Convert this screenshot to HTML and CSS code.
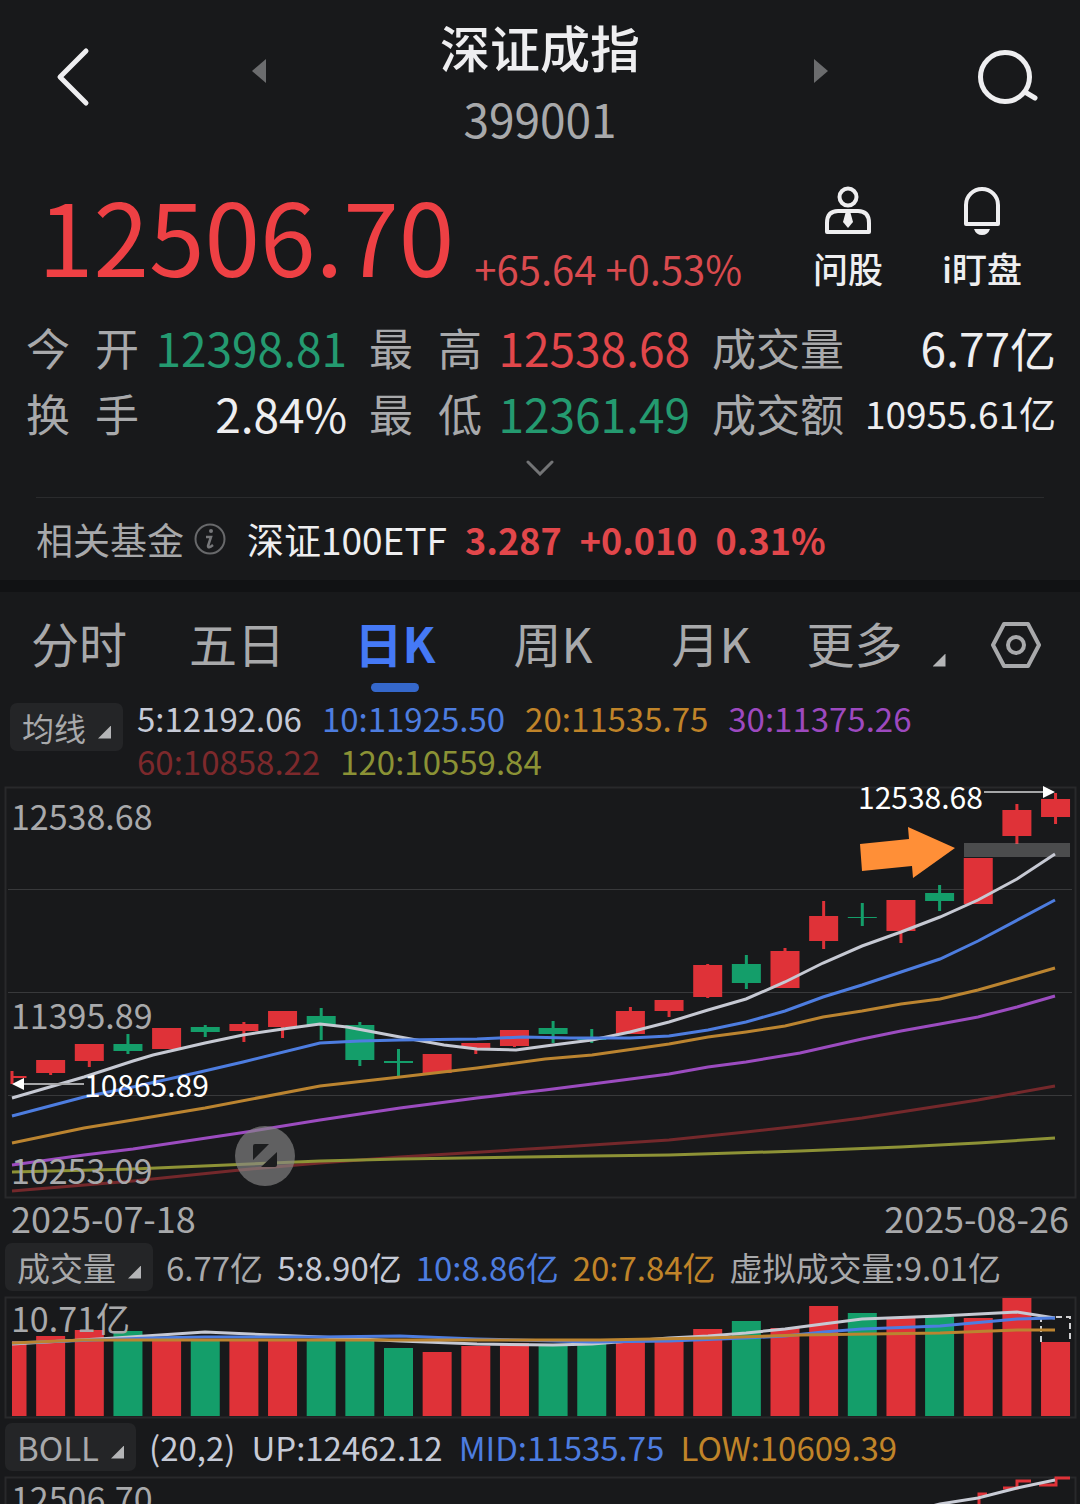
FILE: index.html
```html
<!DOCTYPE html>
<html lang="zh-CN">

<head>
    <meta charset="UTF-8">
    <meta name="viewport" content="width=device-width, initial-scale=1.0">
    <title>深证成指 399001</title>
    <link rel="stylesheet" href="styles.css">
</head>

<body>
    <header class="topbar">
        <button class="icon-btn back" aria-label="返回">
            <svg width="36" height="62" viewBox="0 0 36 62"><path d="M31 5 L5 31 L31 57" class="line-icon"/></svg>
        </button>
        <div class="switcher">
            <button class="step-btn" aria-label="上一个">
                <svg width="14" height="24" viewBox="0 0 14 24"><path d="M14 0 V24 L0 12 Z" fill="#6b6c6e"/></svg>
            </button>
            <div class="title">
                <h1>深证成指</h1>
                <p>399001</p>
            </div>
            <button class="step-btn" aria-label="下一个">
                <svg width="14" height="24" viewBox="0 0 14 24"><path d="M0 0 V24 L14 12 Z" fill="#6b6c6e"/></svg>
            </button>
        </div>
        <button class="icon-btn search" aria-label="搜索">
            <svg width="62" height="56" viewBox="0 0 62 56"><circle cx="28" cy="28" r="24.5" class="line-icon"/><path d="M48 43 L58 49" class="line-icon"/></svg>
        </button>
    </header>

    <main>
        <section class="quote">
            <div class="price-row">
                <strong class="price">12506.70</strong>
                <span class="change">+65.64 +0.53%</span>
                <div class="actions">
                    <button class="action">
                        <svg width="48" height="50" viewBox="0 0 48 50">
                            <circle cx="24" cy="11" r="8.5" fill="none" stroke="#eeeef0" stroke-width="4"/>
                            <path d="M3 46 V37 Q3 25 14 25 H34 Q45 25 45 37 V46 Z" fill="none" stroke="#eeeef0" stroke-width="4" stroke-linejoin="round"/>
                            <path d="M22 25 H26 L29 36 L24 42 L19 36 Z" fill="#eeeef0"/>
                        </svg>
                        问股
                    </button>
                    <button class="action">
                        <svg width="48" height="50" viewBox="0 0 48 50">
                            <path d="M8 38 V19 A16 16 0 0 1 40 19 V38 Z" fill="none" stroke="#eeeef0" stroke-width="4" stroke-linejoin="round"/>
                            <path d="M16 43 H32 Q30 49 24 49 Q18 49 16 43 Z" fill="#eeeef0"/>
                        </svg>
                        i盯盘
                    </button>
                </div>
            </div>

            <dl class="stats">
                <div><dt><span>今</span><span>开</span></dt><dd class="down">12398.81</dd></div>
                <div><dt><span>最</span><span>高</span></dt><dd class="up">12538.68</dd></div>
                <div><dt class="wide">成交量</dt><dd>6.77亿</dd></div>
                <div><dt><span>换</span><span>手</span></dt><dd>2.84%</dd></div>
                <div><dt><span>最</span><span>低</span></dt><dd class="down">12361.49</dd></div>
                <div><dt class="wide">成交额</dt><dd class="small">10955.61亿</dd></div>
            </dl>

            <button class="expand" aria-label="展开">
                <svg width="28" height="16" viewBox="0 0 28 16"><path d="M2 2 L14 14 L26 2" fill="none" stroke="#737476" stroke-width="3" stroke-linecap="round"/></svg>
            </button>
        </section>

        <section class="fund">
            <span class="fund-label">相关基金</span>
            <svg width="32" height="32" viewBox="0 0 32 32">
                <circle cx="16" cy="16" r="14.5" fill="none" stroke="#68696b" stroke-width="2"/>
                <circle cx="17" cy="8" r="2" fill="#77787a"/>
                <path d="M12 14 H17 L14 23 Q14 26 19 22" fill="none" stroke="#77787a" stroke-width="2.5"/>
            </svg>
            <a href="#" class="fund-name">深证100ETF</a>
            <b>3.287</b>
            <b>+0.010</b>
            <b>0.31%</b>
        </section>

        <nav class="tabs">
            <button>分时</button>
            <button>五日</button>
            <button class="active">日K</button>
            <button>周K</button>
            <button>月K</button>
            <button class="more">更多<i class="corner"></i></button>
            <button class="settings" aria-label="设置">
                <svg width="50" height="48" viewBox="0 0 50 48">
                    <path d="M13 3 H37 L48 24 L37 45 H13 L2 24 Z" fill="none" stroke="#a8a9ab" stroke-width="4" stroke-linejoin="round"/>
                    <circle cx="25" cy="24" r="8" fill="none" stroke="#a8a9ab" stroke-width="4"/>
                </svg>
            </button>
        </nav>

        <section>
            <div class="legend ma-legend">
                <button class="picker">均线<i class="corner"></i></button>
                <div class="values">
                    <span class="c5">5:12192.06</span>
                    <span class="c10">10:11925.50</span>
                    <span class="c20">20:11535.75</span>
                    <span class="c30">30:11375.26</span>
                    <span class="c60">60:10858.22</span>
                    <span class="c120">120:10559.84</span>
                </div>
            </div>
            <div class="chart">
                <svg class="kline" viewBox="0 0 1080 414">
                    <rect x="5.5" y="1.5" width="1070" height="410" class="frame"/>
                    <path d="M8 103.5 H1072 M8 206.5 H1072 M8 309.5 H1072" class="grid-line"/>
                    <g id="candles"></g>
                    <rect x="964" y="57" width="106" height="14" fill="#a0a0a0" fill-opacity="0.38"/>
                    <g id="maLines"></g>
                    <text x="11" y="44" class="axis">12538.68</text>
                    <text x="11" y="243" class="axis">11395.89</text>
                    <text x="11" y="398" class="axis">10253.09</text>
                    <path d="M22 298 H84 M984 6 H1045" stroke="#a5a6a8" stroke-width="2"/>
                    <path d="M12 298 L24 292 V304 Z M1055 6 L1043 0 V12 Z" fill="#fff"/>
                    <text x="84" y="311" class="mark">10865.89</text>
                    <text x="858" y="23" class="mark">12538.68</text>
                    <path d="M860 58 L909 53 L908 41 L955 62 L913 92 L912 80 L862 85 Z" fill="#ff8f37"/>
                </svg>
                <button class="fullscreen" aria-label="全屏">
                    <svg width="60" height="60" viewBox="0 0 60 60"><path d="M18 20 Q18 18 20 18 H34 L18 34 Z M42 26 V39 Q42 41 40 41 H26 Z" fill="#1c1d1e"/></svg>
                </button>
            </div>
            <div class="dates"><time>2025-07-18</time><time>2025-08-26</time></div>
        </section>

        <section>
            <div class="legend">
                <button class="picker">成交量<i class="corner"></i></button>
                <div class="values">
                    <span>6.77亿</span>
                    <span class="c5">5:8.90亿</span>
                    <span class="c10">10:8.86亿</span>
                    <span class="c20">20:7.84亿</span>
                    <span>虚拟成交量:9.01亿</span>
                </div>
            </div>
            <div class="chart">
                <svg viewBox="0 0 1080 124">
                    <rect x="5.5" y="1.5" width="1070" height="120" class="frame"/>
                    <g id="volumes"></g>
                    <path d="M1041 46 V21 H1070 V46" fill="none" stroke="#d0d0d2" stroke-width="2" stroke-dasharray="6 4"/>
                    <g id="volumeLines"></g>
                    <text x="11" y="36" class="axis">10.71亿</text>
                </svg>
            </div>
        </section>

        <section>
            <div class="legend boll-legend">
                <button class="picker">BOLL<i class="corner"></i></button>
                <div class="values">
                    <span class="c5">(20,2)</span>
                    <span class="c5">UP:12462.12</span>
                    <span class="c10">MID:11535.75</span>
                    <span class="c20">LOW:10609.39</span>
                </div>
            </div>
            <div class="chart">
                <svg viewBox="0 0 1080 28">
                    <path d="M5.5 28 V1.5 H1075.5 V28" class="frame"/>
                    <path d="M979 28 V18 H987 M1003 12 H1017 V5 H1031 M1039 9 H1056 V2 H1070" fill="none" stroke="#df3238" stroke-width="3"/>
                    <path d="M932 30 L940 28 L978 22 L1017 12 L1055 4" fill="none" stroke="#c9ccd6" stroke-width="3"/>
                    <text x="11" y="36" class="axis">12506.70</text>
                </svg>
            </div>
        </section>
    </main>

    <script>
        const RED = '#df3238';
        const GREEN = '#149e6a';
        const STEP = 38.65;
        const BAR = 29;

        // [涨跌, 最高, 实体上沿, 实体下沿, 最低, 成交量柱顶]
        const days = [
            [1, 285, 290, 292, 298, 45], [1, 274, 274, 287, 289, 40], [1, 258, 258, 275, 281, 34],
            [0, 248, 258, 265, 268, 35], [1, 242, 242, 263, 263, 45], [0, 239, 241, 246, 251, 44],
            [1, 236, 238, 245, 256, 45], [1, 225, 225, 241, 252, 45], [0, 222, 230, 239, 254, 45],
            [0, 236, 239, 274, 280, 45], [0, 263, 275, 277, 290, 52], [1, 268, 268, 287, 287, 56],
            [1, 257, 257, 262, 268, 50], [1, 244, 244, 260, 261, 47], [0, 235, 242, 248, 257, 48],
            [0, 243, 252, 254, 257, 48], [1, 221, 225, 248, 248, 46], [1, 214, 214, 225, 231, 46],
            [1, 178, 179, 211, 212, 33], [0, 169, 178, 197, 203, 25], [1, 162, 165, 202, 202, 32],
            [1, 115, 130, 155, 163, 10], [0, 117, 131, 132, 140, 17], [1, 114, 114, 145, 157, 21],
            [0, 99, 107, 115, 125, 21], [1, 72, 72, 118, 118, 22], [1, 18, 24, 50, 58, 2],
            [1, 7, 13, 31, 38, 46]
        ];

        const maLines = [
            ['#74282b', '12,405 133,395 240,384 320,377 400,371 545,362 592,359 669,354 746,346 800,340 862,332 978,314 1055,300'],
            ['#8d9236', '12,386 133,383 320,375 400,373 592,370 669,369 800,365 900,361 978,357 1055,352'],
            ['#9c4cc0', '12,379 84,369 133,363 240,347 283,340 320,334 400,322 477,312 545,304 592,298 669,288 708,281 746,276 800,267 862,253 901,245 940,238 978,231 1017,221 1055,210'],
            ['#bb8430', '12,357 84,342 133,334 205,322 320,300 400,291 477,282 545,273 592,269 669,258 708,251 746,246 785,240 823,231 862,225 901,218 940,213 978,204 1017,193 1055,182'],
            ['#c6c9d3', '12,312 84,291 133,275 153,269 205,257 243,249 283,243 320,238 347,241 400,251 444,259 477,263 516,264 553,259 592,254 630,246 669,236 708,224 746,213 785,196 823,177 862,160 901,146 940,131 978,114 1017,93 1055,68'],
            ['#4d7de0', '12,330 84,311 133,301 200,286 243,276 320,257 360,255 400,254 477,253 523,251 570,252 630,252 669,250 708,244 746,236 785,225 823,211 862,199 901,186 940,173 978,155 1055,114']
        ];

        const volumeLines = [
            ['#c6c9d3', '12,48 115,42 205,36 320,41 400,45 477,48 553,49 592,48 630,45 669,42 708,40 746,37 785,33 823,28 862,23 940,20 1017,16 1055,22'],
            ['#4d7de0', '12,47 150,42 205,41 320,41 400,40 477,43 592,46 669,45 746,42 785,40 823,36 862,33 940,30 1017,23 1055,22'],
            ['#bb8430', '12,47 84,44 160,44 400,44 600,44 708,42 800,39 940,37 1017,34 1055,34']
        ];

        function drawLines(id, lines) {
            document.getElementById(id).innerHTML = lines.map(([color, points]) =>
                `<polyline points="${points}" fill="none" stroke="${color}" stroke-width="3"/>`
            ).join('');
        }

        let candles = '';
        let volumes = '';
        days.forEach(([up, high, top, bottom, low, volume], i) => {
            const x = 12 + i * STEP;
            // 第一根只露出右半边
            const left = i === 0 ? x : x - BAR / 2;
            const width = i === 0 ? BAR / 2 : BAR;
            const color = up ? RED : GREEN;
            candles += `<rect x="${x - 1.5}" y="${high}" width="3" height="${low - high}" fill="${color}"/>`;
            candles += `<rect x="${left}" y="${top}" width="${width}" height="${bottom - top}" fill="${color}"/>`;
            volumes += `<rect x="${left}" y="${volume}" width="${width}" height="${120 - volume}" fill="${color}"/>`;
        });
        document.getElementById('candles').innerHTML = candles;
        document.getElementById('volumes').innerHTML = volumes;
        drawLines('maLines', maLines);
        drawLines('volumeLines', volumeLines);
    </script>
</body>

</html>
```
FILE: styles.css
```css
* {
    box-sizing: border-box;
}

body {
    margin: 0;
    background-color: #18191b;
    color: #eeeef0;
    font-family: "Noto Sans CJK SC", sans-serif;
}

h1,
p,
dl,
dd {
    margin: 0;
}

button {
    padding: 0;
    border: none;
    background: none;
    color: inherit;
    font: inherit;
    cursor: pointer;
}

svg {
    display: block;
}

.up {
    color: #e2474b;
}

.down {
    color: #249a70;
}

/* 顶部标题栏 */
.topbar {
    display: grid;
    grid-template-columns: 1fr auto 1fr;
    align-items: start;
    padding: 10px 41px 0 55px;
}

.icon-btn {
    height: 134px;
}

.back {
    justify-self: start;
}

.search {
    justify-self: end;
}

.switcher {
    display: flex;
    align-items: flex-start;
    gap: 174px;
    margin-left: -14px;
}

.step-btn {
    height: 122px;
}

.line-icon {
    fill: none;
    stroke: #eeeef0;
    stroke-width: 5;
    stroke-linecap: round;
    stroke-linejoin: round;
}

.title {
    text-align: center;
}

.title h1 {
    font-size: 50px;
    font-weight: 500;
    line-height: 72px;
}

.title p {
    color: #a8a9ab;
    font-size: 46px;
    line-height: 72px;
}

/* 报价 */
.price-row {
    display: flex;
    align-items: flex-end;
    height: 142px;
    padding: 30px 58px 0 38px;
}

.price {
    align-self: flex-start;
    color: #ee4044;
    font-size: 100px;
    font-weight: 400;
    line-height: 100px;
}

.change {
    margin-left: 20px;
    color: #d94a4e;
    font-size: 40px;
    line-height: 56px;
    white-space: nowrap;
}

.actions {
    display: flex;
    gap: 56px;
    margin-left: auto;
}

.action {
    display: flex;
    flex-direction: column;
    align-items: center;
    gap: 4px;
    min-width: 76px;
    font-size: 35px;
    font-weight: 500;
    line-height: 56px;
}

.stats {
    display: grid;
    grid-template-columns: 321fr 321fr 344fr;
    column-gap: 22px;
    margin-top: 18px;
    padding: 0 24px 0 26px;
    line-height: 66px;
}

.stats div {
    display: flex;
    justify-content: space-between;
}

.stats dt {
    display: flex;
    justify-content: space-between;
    width: 113px;
    color: #a8a9ab;
    font-size: 44px;
}

.stats .wide {
    width: auto;
}

.stats dd {
    font-size: 46px;
}

.stats .small {
    font-size: 37px;
}

.expand {
    display: block;
    width: 100%;
    padding: 14px 0 21px;
}

.expand svg {
    margin: 0 auto;
}

/* 相关基金 */
.fund {
    display: flex;
    align-items: center;
    height: 83px;
    margin: 0 36px;
    border-top: 1px solid #2a2b2d;
    font-size: 37px;
    white-space: nowrap;
}

.fund svg {
    margin: 0 21px 0 10px;
}

.fund-label {
    color: #a8a9ab;
}

.fund-name {
    color: inherit;
    text-decoration: none;
}

.fund b {
    margin-left: 18px;
    color: #e2474b;
    font-size: 36px;
}

/* 周期切换 */
.tabs {
    display: grid;
    grid-template-columns: repeat(6, 158fr) 132fr;
    border-top: 12px solid #111214;
    color: #a8a9ab;
    font-size: 48px;
    line-height: 100px;
}

.tabs button {
    display: flex;
    justify-content: center;
    align-items: center;
    position: relative;
    height: 100px;
}

.tabs .active {
    color: #4579f6;
    font-weight: 700;
}

.tabs .active::after {
    content: "";
    position: absolute;
    bottom: 0;
    width: 48px;
    height: 9px;
    border-radius: 5px;
    background-color: #3568cb;
}

.tabs .more {
    padding-left: 14px;
}

.tabs .settings {
    padding: 6px 0 0 4px;
}

.corner {
    width: 13px;
    height: 13px;
    background-color: #b4b5b7;
    clip-path: polygon(100% 0, 100% 100%, 0 100%);
}

.more .corner {
    margin: 36px 0 0 30px;
}

/* 指标栏 */
.legend {
    display: flex;
    align-items: flex-start;
    gap: 13px;
    padding: 0 5px 5px;
    color: #a8a9ab;
    font-size: 33px;
    line-height: 48px;
}

.picker {
    display: flex;
    align-items: center;
    flex-shrink: 0;
    height: 48px;
    padding: 0 12px;
    border-radius: 7px;
    background-color: #242527;
}

.picker .corner {
    margin: 10px 0 0 12px;
}

.values {
    display: flex;
    flex-wrap: wrap;
    column-gap: 14px;
}

.ma-legend {
    gap: 14px;
    padding: 5px 150px 3px 10px;
    line-height: 43px;
}

.ma-legend .picker {
    margin-top: 6px;
    font-size: 32px;
}

.ma-legend .values {
    column-gap: 20px;
}

.boll-legend {
    padding-top: 3px;
}

.boll-legend .values {
    column-gap: 16px;
}

.c5 { color: #c6cad6; }
.c10 { color: #4d7de0; }
.c20 { color: #c08429; }
.c30 { color: #9d49bf; }
.c60 { color: #7d292c; }
.c120 { color: #8b9235; }

/* 图表 */
.chart {
    position: relative;
}

.chart > svg {
    width: 100%;
    height: auto;
}

.chart > .kline {
    overflow: visible;
}

.frame {
    fill: none;
    stroke: #28292b;
    stroke-width: 2;
}

.grid-line {
    fill: none;
    stroke: #38393b;
    stroke-width: 1;
}

.axis {
    fill: #a8a9ab;
    font-size: 34px;
}

.mark {
    fill: #fff;
    font-size: 30px;
}

.fullscreen {
    position: absolute;
    top: 340px;
    left: 235px;
    border-radius: 50%;
    background-color: rgba(135, 135, 135, 0.65);
}

.dates {
    display: flex;
    justify-content: space-between;
    padding: 0 11px 9px;
    color: #a8a9ab;
    font-size: 36px;
    line-height: 34px;
}
```
